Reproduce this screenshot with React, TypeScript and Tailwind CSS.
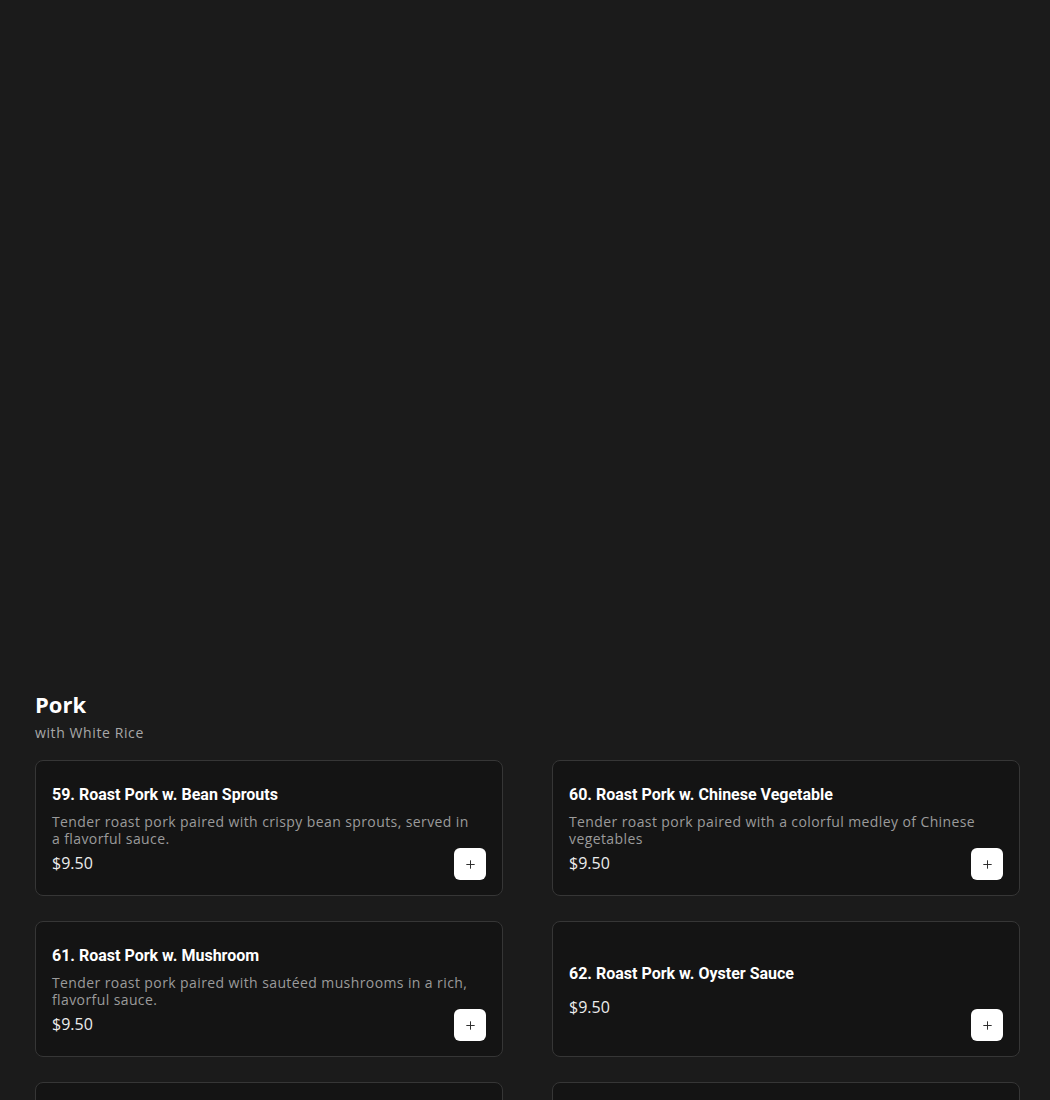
import { Plus } from "lucide-react";

type MenuItem = {
  id: number;
  name: string;
  description?: string;
  price: string;
};

const items: MenuItem[] = [
  {
    id: 59,
    name: "Roast Pork w. Bean Sprouts",
    description: "Tender roast pork paired with crispy bean sprouts, served in a flavorful sauce.",
    price: "$9.50",
  },
  {
    id: 60,
    name: "Roast Pork w. Chinese Vegetable",
    description: "Tender roast pork paired with a colorful medley of Chinese vegetables",
    price: "$9.50",
  },
  {
    id: 61,
    name: "Roast Pork w. Mushroom",
    description: "Tender roast pork paired with sautéed mushrooms in a rich, flavorful sauce.",
    price: "$9.50",
  },
  { id: 62, name: "Roast Pork w. Oyster Sauce", price: "$9.50" },
  { id: 63, name: "Roast Pork w. Broccoli", price: "$9.50" },
  { id: 64, name: "Roast Pork w. Snow Peas", price: "$9.50" },
];

const bodyFont = "font-['Open_Sans',sans-serif]";

function MenuCard({ item }: { item: MenuItem }) {
  return (
    <article className="relative flex h-[136px] items-center rounded-lg border border-[#363636] bg-[#141414] px-[16px] pt-[2px]">
      <div className="flex w-[426px] flex-col">
        <h3 className="font-['Roboto',sans-serif] text-[16px] font-bold leading-6 text-white">
          {item.id}. {item.name}
        </h3>
        {item.description ? (
          <p className={`${bodyFont} mb-[4px] mt-[6px] text-[14px] leading-[17px] tracking-[0.4px] text-[#9b9b9b]`}>
            {item.description}
          </p>
        ) : null}
        <p
          className={`${bodyFont} text-[16px] leading-6 text-[#ececec] ${item.description ? "" : "mt-[9px]"}`}
        >
          {item.price}
        </p>
      </div>
      <button
        type="button"
        className="absolute bottom-[15px] right-[16px] flex h-8 w-8 items-center justify-center rounded-md bg-white text-[#2a2a2a]"
      >
        <Plus size={13} strokeWidth={1.8} />
      </button>
    </article>
  );
}

export default function App() {
  return (
    <div className="min-h-screen bg-[#1b1b1b]">
      <div className="h-[688px]" />
      <section className="pl-[35px] pr-[30px]">
        <h2 className={`${bodyFont} text-[22px] font-bold leading-8 text-white`}>Pork</h2>
        <p className={`${bodyFont} mt-[3px] text-[14px] leading-5 tracking-[0.6px] text-[#a8a8a8]`}>
          with White Rice
        </p>
        <div className="mt-[17px] grid grid-cols-2 gap-x-[49px] gap-y-[25px] pb-10">
          {items.map((item) => (
            <MenuCard key={item.id} item={item} />
          ))}
        </div>
      </section>
    </div>
  );
}
